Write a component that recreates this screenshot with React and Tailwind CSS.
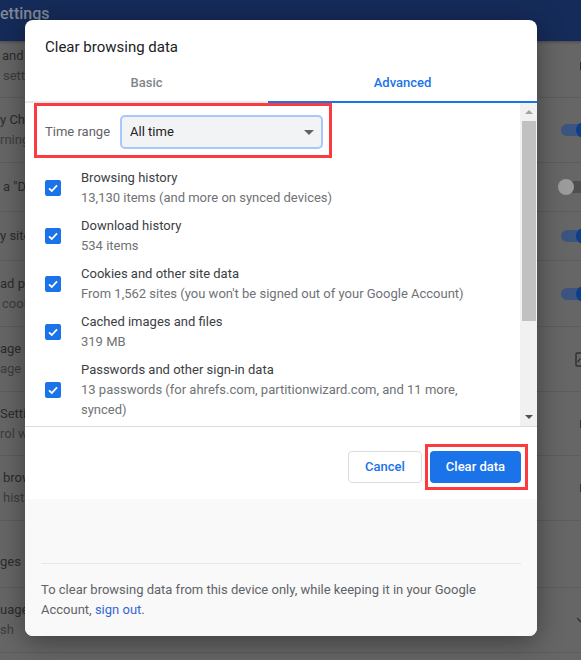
import React from "react";

const rows = [
  { h: "h-[57px] pb-[6px]", top: "and", sub: "sett", topPad: "pl-[2px]", subPad: "pl-[3px]", right: "edge" },
  { h: "h-[65px]", top: "y Chr", sub: "rning", topPad: "", subPad: "", right: "on" },
  { h: "h-[49px]", top: 'a "D', sub: "", topPad: "pl-[3px]", subPad: "", right: "off" },
  { h: "h-[49px]", top: "y site", sub: "", topPad: "", subPad: "", right: "on" },
  { h: "h-[66px]", top: "ad p", sub: "cool", topPad: "", subPad: "pl-[2px]", right: "on" },
  { h: "h-[65px]", top: "age c", sub: "age H", topPad: "", subPad: "", right: "box" },
  { h: "h-[64px]", top: "Settin", sub: "rol w", topPad: "", subPad: "", right: "edge" },
  { h: "h-[65px] border-[#4a4a4a]", top: "brow", sub: "hist", topPad: "pl-[3px]", subPad: "pl-[3px]", right: "edge" },
  { h: "h-[67px] pt-[15px]", top: "ges", sub: "", topPad: "", subPad: "", right: null },
  { h: "h-[65px]", top: "uage", sub: "sh", topPad: "", subPad: "", right: "chev" },
];

const items = [
  { title: "Browsing history", sub: "13,130 items (and more on synced devices)" },
  { title: "Download history", sub: "534 items" },
  { title: "Cookies and other site data", sub: "From 1,562 sites (you won't be signed out of your Google Account)" },
  { title: "Cached images and files", sub: "319 MB" },
  { title: "Passwords and other sign-in data", sub: "13 passwords (for ahrefs.com, partitionwizard.com, and 11 more, synced)" },
];

const RowIcon = ({ type }) => {
  if (type === "on")
    return (
      <div className="relative h-3 w-5">
        <div className="h-full w-full rounded-l-full bg-[#3c5580]" />
        <div className="absolute left-[15px] top-[-2px] h-4 w-4 rounded-full bg-[#0e3d8a]" />
      </div>
    );
  if (type === "off")
    return (
      <div className="relative h-3 w-[23px]">
        <div className="ml-[3px] h-full bg-[#4f4f4f]" />
        <div className="absolute left-0 top-[-2px] h-4 w-4 rounded-full bg-[#9c9c9c]" />
      </div>
    );
  if (type === "box")
    return (
      <svg width="6" height="15" viewBox="0 0 6 15" fill="none">
        <rect x="1" y="1" width="13" height="13" rx="1" stroke="#303030" strokeWidth="1.4" />
        <path d="M2.5 10 L5.5 6.5" stroke="#303030" strokeWidth="1.2" />
      </svg>
    );
  if (type === "edge") return <div className="h-2 w-px bg-[#303030]" />;
  if (type === "chev")
    return (
      <svg width="4" height="6" viewBox="0 0 4 6" fill="none">
        <path d="M0 1 L4 5" stroke="#303030" strokeWidth="1.4" />
      </svg>
    );
  return null;
};

const Check = () => (
  <div className="flex h-4 w-4 shrink-0 items-center justify-center rounded-[2px] bg-[#1a73e8]">
    <svg width="12" height="12" viewBox="0 0 12 12" fill="none">
      <path d="M2 6.3 L4.8 9 L10 3.4" stroke="white" strokeWidth="1.8" />
    </svg>
  </div>
);

export default function App() {
  return (
    <div className="relative h-[660px] w-[581px] overflow-hidden bg-[#666666] font-['Roboto',sans-serif] text-[13px]">
      {/* page behind the dialog */}
      <div className="h-[41px] bg-[#152b59] text-[16px] font-medium leading-[28px] text-[#7f8894] shadow-[0_1px_3px_rgba(0,0,0,0.3)]">
        ettings
      </div>
      <div className="text-[#2b2b30]">
        {rows.map((r) => (
          <div key={r.top} className={`flex items-center justify-between border-b border-[#5c5c5c] ${r.h}`}>
            <div className="leading-[20px]">
              <div className={r.topPad}>{r.top}</div>
              {r.sub && <div className={`text-[#3c3c40] ${r.subPad}`}>{r.sub}</div>}
            </div>
            <RowIcon type={r.right} />
          </div>
        ))}
      </div>

      {/* dialog */}
      <div className="absolute left-[25px] top-[20px] flex h-[616px] w-[512px] flex-col overflow-hidden rounded-[8px] bg-white shadow-[0_6px_28px_rgba(0,0,0,0.4)]">
        <div className="pl-5 pt-[17px] text-[15px] leading-[20px] text-[#202124]">Clear browsing data</div>
        <div className="mt-[5px] flex h-[41px] border-b-2 border-[#e8eaed] text-[13px] font-medium">
          <div className="flex w-[243px] items-center justify-center pt-[3px] text-[#80868b]">Basic</div>
          <div className="mb-[-2px] flex flex-1 items-center justify-center border-b-2 border-[#1a73e8] pt-[3px] text-[#1a73e8]">Advanced</div>
        </div>

        <div className="flex h-[323px]">
          <div className="flex-1 overflow-hidden">
            <div className="flex items-center pl-5 pt-[12px]">
              <span className="text-[#5f6368]">Time range</span>
              <div className="ml-[10px] flex h-[34px] w-[203px] items-center justify-between rounded-[5px] border-2 border-[#a8c7fa] bg-[#f1f3f4] pl-2 pr-[7px] text-[#202124]">
                All time
                <div className="h-0 w-0 border-x-[5px] border-t-[5px] border-x-transparent border-t-[#5f6368]" />
              </div>
            </div>
            <div className="mt-[19px] flex flex-col gap-[8px] pl-5 pr-[16px]">
              {items.map((it) => (
                <div key={it.title} className="flex items-center">
                  <Check />
                  <div className="ml-5 leading-[20px]">
                    <div className="text-[#3c4043]">{it.title}</div>
                    <div className="text-[#6f7276]">{it.sub}</div>
                  </div>
                </div>
              ))}
            </div>
          </div>
          {/* scrollbar */}
          <div className="flex w-[17px] flex-col items-center bg-[#f1f1f1]">
            <div className="flex h-[18px] items-center justify-center">
              <div className="h-0 w-0 border-x-[4px] border-b-[4px] border-x-transparent border-b-[#a3a3a3]" />
            </div>
            <div className="h-[200px] w-[14px] bg-[#c1c1c1]" />
            <div className="flex-1" />
            <div className="flex h-[18px] items-center justify-center">
              <div className="h-0 w-0 border-x-[4px] border-t-[4px] border-x-transparent border-t-[#505050]" />
            </div>
          </div>
        </div>

        <div className="flex h-[73px] items-start justify-end gap-[8px] border-t border-[#dadce0] pr-[16px] pt-[24px]">
          <button className="h-8 w-[74px] rounded-[4px] border border-[#dadce0] bg-white text-[13px] font-medium text-[#1a73e8]">Cancel</button>
          <button className="h-8 w-[91px] rounded-[4px] bg-[#1a73e8] text-[13px] font-medium text-white">Clear data</button>
        </div>

        <div className="flex-1 bg-[#f9f9f9] px-4">
          <div className="mt-[64px] border-t border-[#e8e8e8] pt-[16px] text-[13px] leading-[20px] text-[#5f6368]">
            To clear browsing data from this device only, while keeping it in your Google Account, <span className="text-[#3367d6]">sign out</span>.
          </div>
        </div>
      </div>

      {/* red annotation boxes */}
      <div className="absolute left-[34px] top-[103px] h-[55px] w-[298px] border-[3px] border-[#fb3b40]" />
      <div className="absolute left-[425px] top-[444px] h-[46px] w-[103px] border-[3px] border-[#fb3b40]" />
    </div>
  );
}
